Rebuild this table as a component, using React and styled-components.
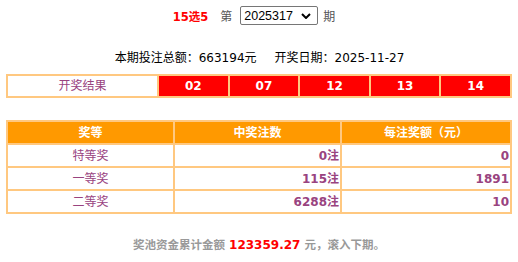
import React from "react";
import styled, { createGlobalStyle } from "styled-components";

const GlobalStyle = createGlobalStyle`
  html, body { margin: 0; padding: 0; background: #fff; }
  body {
    font-family: "DejaVu Sans", "Noto Sans CJK SC", sans-serif;
    font-size: 12px;
    color: #000;
  }
`;

const Page = styled.div`
  width: 518px;
  display: flex;
  flex-direction: column;
  align-items: center;
`;

const TitleRow = styled.div`
  display: flex;
  align-items: center;
  padding-top: 6px;
  padding-right: 10px;
  height: 19px;
`;

const Brand = styled.span`
  color: #ff0000;
  font-weight: bold;
  font-size: 11.5px;
  margin-right: 12px;
`;

const Word = styled.span`
  color: #555;
  font-size: 12px;
  margin: ${(p) => p.$m || "0"};
`;

const SelectWrap = styled.span`
  position: relative;
  display: inline-flex;
`;

const IssueSelect = styled.select`
  appearance: none;
  -webkit-appearance: none;
  width: 78px;
  height: 19px;
  font-family: "Liberation Sans", Arial, sans-serif;
  font-size: 12.5px;
  color: #000;
  background: #fff;
  border: 1px solid #767676;
  border-radius: 2px;
  padding: 0 0 0 3px;
  box-sizing: border-box;
  outline: none;
`;

const Chevron = styled.svg`
  position: absolute;
  right: 7px;
  top: 7px;
  width: 10px;
  height: 6px;
  pointer-events: none;
`;

const Summary = styled.div`
  margin-top: 26px;
  line-height: 14px;
  display: flex;
  align-items: center;
  padding-left: 1px;
`;

const Spacer = styled.span`
  display: inline-block;
  width: ${(p) => p.$w}px;
`;

const Grid = styled.table`
  width: 506px;
  table-layout: fixed;
  border-collapse: separate;
  border-spacing: 2px;
  background: #ffc880;
  margin-top: ${(p) => p.$mt}px;
  font-size: 12px;
`;

const Cell = styled.td`
  height: ${(p) => p.$h || 21}px;
  padding: 0 ${(p) => (p.$align === "right" ? "1px" : "0")} 0 0;
  text-align: ${(p) => p.$align || "center"};
  line-height: 14px;
  background: ${(p) =>
    p.$kind === "red" ? "#ff0000" : p.$kind === "head" ? "#ff9900" : "#ffffff"};
  color: ${(p) => (p.$kind === "red" || p.$kind === "head" ? "#ffffff" : "#99437f")};
  font-weight: ${(p) => (p.$bold ? "bold" : "normal")};
  vertical-align: middle;
`;

const Footer = styled.div`
  margin-top: 24px;
  line-height: 14px;
  font-size: 11.5px;
  font-weight: bold;
  color: #999;
`;

const Pool = styled.span`
  color: #ff0000;
  font-size: 12px;
`;

const numbers = ["02", "07", "12", "13", "14"];
const prizes = [
  { name: "特等奖", count: "0注", amount: "0" },
  { name: "一等奖", count: "115注", amount: "1891" },
  { name: "二等奖", count: "6288注", amount: "10" },
];

export default function App() {
  return (
    <>
      <GlobalStyle />
      <Page>
        <TitleRow>
          <Brand>15选5</Brand>
          <Word $m="0 8px 0 0">第</Word>
          <SelectWrap>
            <IssueSelect defaultValue="2025317">
              <option value="2025317">2025317</option>
              <option value="2025316">2025316</option>
              <option value="2025315">2025315</option>
            </IssueSelect>
            <Chevron viewBox="0 0 10 6">
              <path d="M1 1 L5 5 L9 1" fill="none" stroke="#000" strokeWidth="2" />
            </Chevron>
          </SelectWrap>
          <Word $m="0 0 0 5px">期</Word>
        </TitleRow>

        <Summary>
          <span>本期投注总额：</span>
          <span>663194元</span>
          <Spacer $w={18} />
          <span>开奖日期：2025-11-27</span>
        </Summary>

        <Grid $mt={9}>
          <colgroup>
            <col style={{ width: 149 }} />
            {numbers.map((n) => (
              <col key={n} />
            ))}
          </colgroup>
          <tbody>
            <tr>
              <Cell $h={20}>开奖结果</Cell>
              {numbers.map((n) => (
                <Cell key={n} $h={20} $kind="red" $bold>
                  {n}
                </Cell>
              ))}
            </tr>
          </tbody>
        </Grid>

        <Grid $mt={22}>
          <colgroup>
            <col style={{ width: 165 }} />
            <col style={{ width: 165 }} />
            <col />
          </colgroup>
          <tbody>
            <tr>
              <Cell $kind="head" $bold>奖等</Cell>
              <Cell $kind="head" $bold>中奖注数</Cell>
              <Cell $kind="head" $bold>每注奖额（元）</Cell>
            </tr>
            {prizes.map((p) => (
              <tr key={p.name}>
                <Cell>{p.name}</Cell>
                <Cell $align="right" $bold>{p.count}</Cell>
                <Cell $align="right" $bold>{p.amount}</Cell>
              </tr>
            ))}
          </tbody>
        </Grid>

        <Footer>
          奖池资金累计金额 <Pool>123359.27</Pool> 元，滚入下期。
        </Footer>
      </Page>
    </>
  );
}
